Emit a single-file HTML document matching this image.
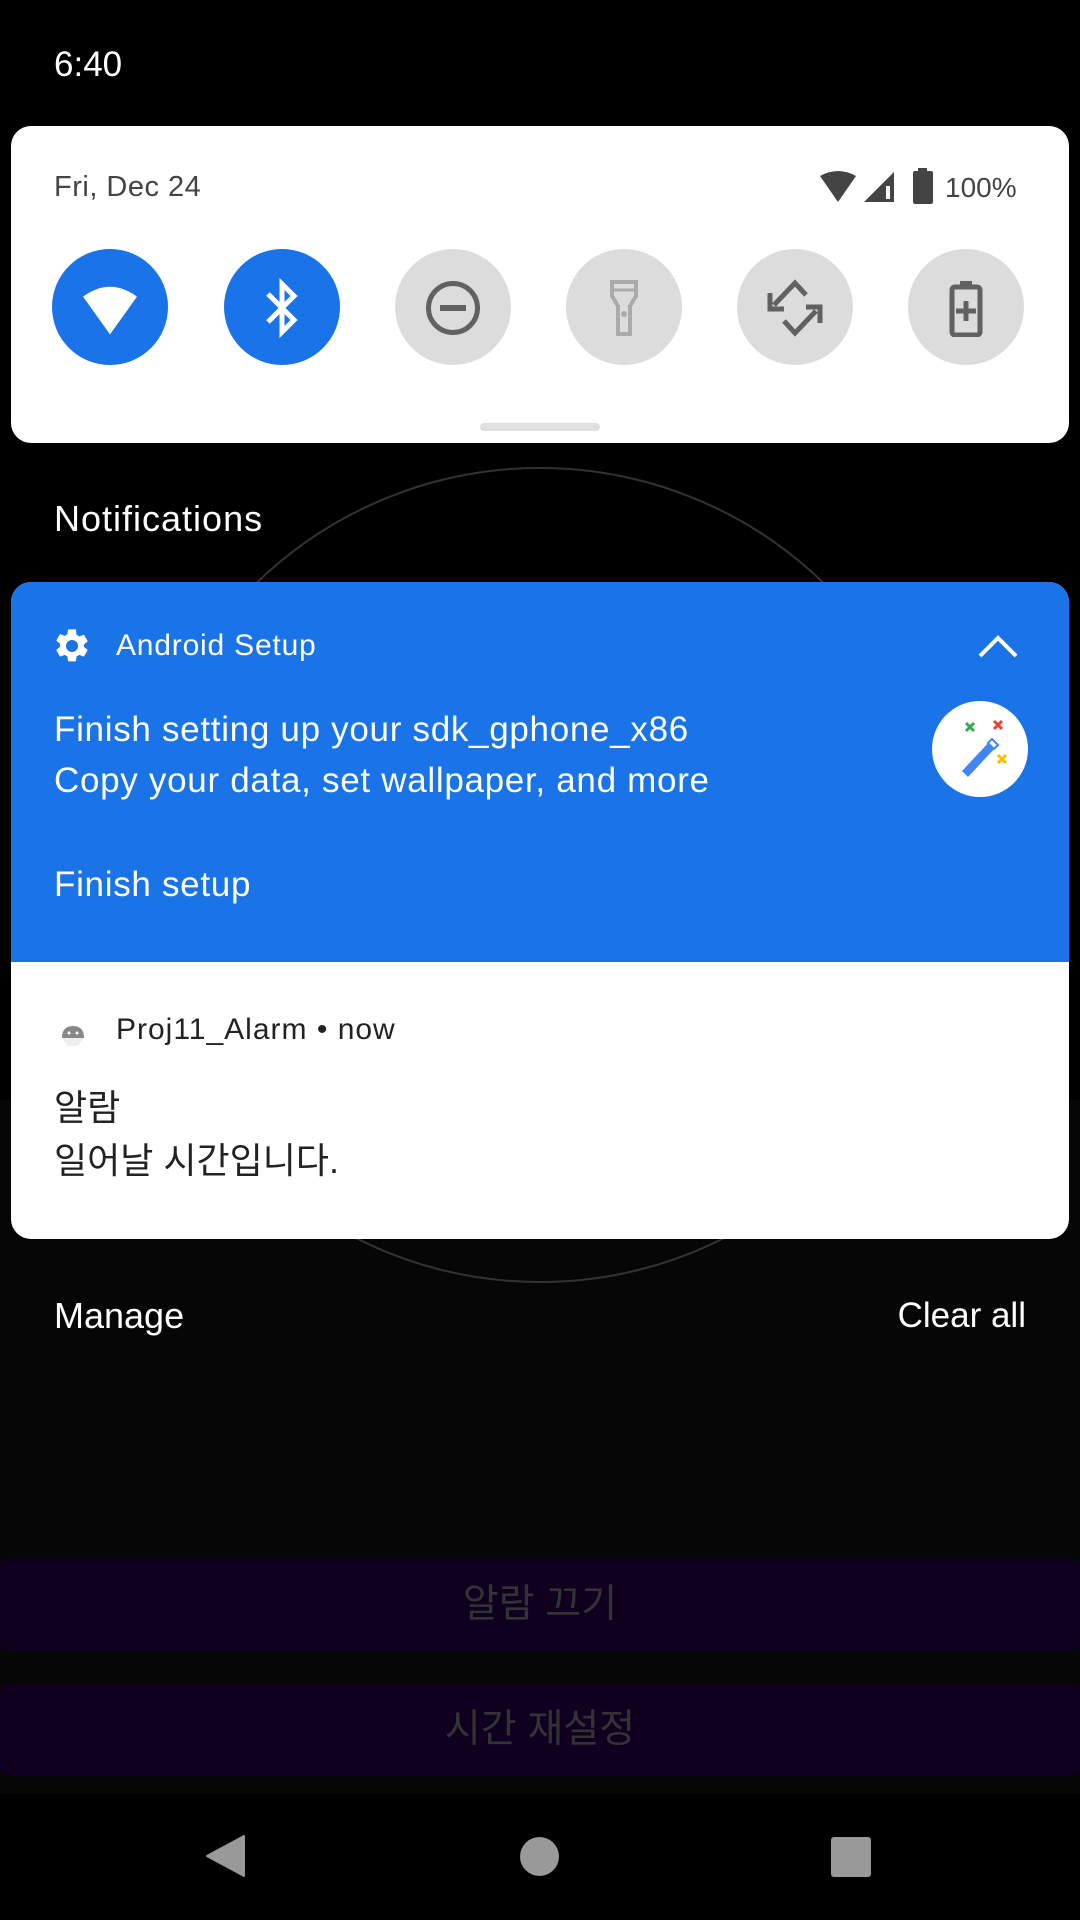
<!DOCTYPE html>
<html><head><meta charset="utf-8"><style>
*{margin:0;padding:0;box-sizing:border-box}
body{width:1080px;height:1920px;background:#060606;position:relative;overflow:hidden;font-family:"Liberation Sans","Noto Sans CJK KR",sans-serif}
.a{position:absolute}
.t{position:absolute;white-space:nowrap;line-height:1}
</style></head><body>
<div class="a" style="left:0;top:0;width:1080px;height:1100px;background:#000"></div>
<div class="a" style="left:132px;top:467px;width:816px;height:816px;border:2px solid #333;border-radius:50%"></div>
<div class="t" style="left:54px;top:47px;font-size:35px;color:#fff">6:40</div>

<div class="a" style="left:11px;top:126px;width:1058px;height:317px;background:#fff;border-radius:20px"></div>
<div class="t" style="left:54px;top:173px;font-size:29px;letter-spacing:0.5px;color:#444">Fri, Dec 24</div>
<svg class="a" style="left:818px;top:170px" width="50" height="34" viewBox="0 0 50 34"><path d="M2 6 Q20 -4 38 6 L20 32Z" fill="#444"/></svg>
<svg class="a" style="left:862px;top:170px" width="34" height="34" viewBox="0 0 34 34"><path d="M32 2 V32 H2Z" fill="#444"/><path d="M24 16 V29 H28 V16Z" fill="#fff"/></svg>
<svg class="a" style="left:911px;top:168px" width="24" height="36" viewBox="0 0 24 36"><rect x="7" y="0" width="9" height="4" fill="#444"/><rect x="2" y="3" width="20" height="33" rx="2" fill="#444"/></svg>
<div class="t" style="left:945px;top:174px;font-size:28px;color:#444">100%</div>

<div class="a" style="left:52px;top:249px;width:116px;height:116px;border-radius:50%;background:#1a73e8"></div>
<svg class="a" style="left:80px;top:284px" width="60" height="54" viewBox="0 0 64 60"><path d="M2 14 Q32 -8 62 14 L32 56Z" fill="#fff"/></svg>
<div class="a" style="left:224px;top:249px;width:116px;height:116px;border-radius:50%;background:#1a73e8"></div>
<svg class="a" style="left:258px;top:278px" width="48" height="60" viewBox="0 0 48 60"><path d="M10 16 L36 42 L24 54 V6 L36 18 L10 44" fill="none" stroke="#fff" stroke-width="5" stroke-linejoin="miter"/></svg>
<div class="a" style="left:395px;top:249px;width:116px;height:116px;border-radius:50%;background:#dcdcdc"></div>
<div class="a" style="left:426px;top:281px;width:54px;height:54px;border-radius:50%;border:5px solid #616161"></div>
<div class="a" style="left:440px;top:305px;width:26px;height:6px;background:#616161"></div>
<div class="a" style="left:566px;top:249px;width:116px;height:116px;border-radius:50%;background:#dcdcdc"></div>
<svg class="a" style="left:604px;top:280px" width="40" height="56" viewBox="0 0 40 56"><path d="M8 2 H32 V16 L26 26 V54 H14 V26 L8 16Z" fill="none" stroke="#aaa" stroke-width="4"/><line x1="8" y1="10" x2="32" y2="10" stroke="#aaa" stroke-width="3"/><circle cx="20" cy="34" r="3" fill="#aaa"/></svg>
<div class="a" style="left:737px;top:249px;width:116px;height:116px;border-radius:50%;background:#dcdcdc"></div>
<svg class="a" style="left:766px;top:279px" width="58" height="58" viewBox="0 0 58 58"><path d="M8 26 L29 4 L40 16 M50 32 L29 54 L18 42" fill="none" stroke="#616161" stroke-width="5"/><path d="M4 14 V30 H18" fill="none" stroke="#616161" stroke-width="5"/><path d="M54 44 V28 H40" fill="none" stroke="#616161" stroke-width="5"/></svg>
<div class="a" style="left:908px;top:249px;width:116px;height:116px;border-radius:50%;background:#dcdcdc"></div>
<svg class="a" style="left:948px;top:281px" width="36" height="56" viewBox="0 0 36 56"><rect x="12" y="0" width="12" height="5" fill="#616161"/><rect x="4" y="6" width="28" height="48" rx="3" fill="none" stroke="#616161" stroke-width="5"/><path d="M18 20 V40 M8 30 H28" stroke="#616161" stroke-width="5"/></svg>
<div class="a" style="left:480px;top:423px;width:120px;height:8px;border-radius:4px;background:#e0e0e0"></div>

<div class="t" style="left:54px;top:501px;font-size:36px;letter-spacing:1px;color:#fff">Notifications</div>

<div class="a" style="left:11px;top:582px;width:1058px;height:657px;border-radius:20px;overflow:hidden;background:#fff">
  <div class="a" style="left:0;top:0;width:1058px;height:380px;background:#1b73e8"></div>
</div>
<svg class="a" style="left:52px;top:626px" width="40" height="40" viewBox="0 0 24 24"><path fill="#fff" d="M19.14 12.94c.04-.3.06-.61.06-.94s-.02-.64-.07-.94l2.03-1.58a.49.49 0 0 0 .12-.61l-1.92-3.32a.49.49 0 0 0-.59-.22l-2.390.96c-.5-.38-1.030-.7-1.62-.94l-.36-2.540A.48.48 0 0 0 13.92 2h-3.84a.48.48 0 0 0-.48.41l-.36 2.54c-.59.24-1.13.57-1.62.94l-2.39-.96a.49.49 0 0 0-.59.22L2.72 8.47a.47.47 0 0 0 .12.61l2.03 1.58c-.05.3-.09.63-.09.94s.02.64.07.94l-2.03 1.58a.49.49 0 0 0-.12.61l1.92 3.32c.12.22.37.29.59.22l2.39-.96c.5.38 1.03.7 1.62.94l.36 2.54c.05.24.24.41.48.41h3.84c.24 0 .44-.17.47-.41l.36-2.54c.59-.24 1.13-.56 1.62-.94l2.39.96c.22.08.47 0 .59-.22l1.92-3.32a.47.47 0 0 0-.12-.61l-2.01-1.58zM12 15.6A3.6 3.6 0 1 1 12 8.4a3.6 3.6 0 0 1 0 7.2z"/></svg>
<div class="t" style="left:116px;top:631px;font-size:30px;letter-spacing:0.8px;color:#fff">Android Setup</div>
<svg class="a" style="left:976px;top:632px" width="44" height="28" viewBox="0 0 44 28"><path d="M4 24 L22 6 L40 24" fill="none" stroke="#fff" stroke-width="4"/></svg>
<div class="t" style="left:54px;top:712px;font-size:35px;letter-spacing:0.7px;color:#fff">Finish setting up your sdk_gphone_x86</div>
<div class="t" style="left:54px;top:763px;font-size:35px;letter-spacing:0.7px;color:#fff">Copy your data, set wallpaper, and more</div>
<div class="a" style="left:932px;top:701px;width:96px;height:96px;border-radius:50%;background:#fff"></div>
<svg class="a" style="left:932px;top:701px" width="96" height="96" viewBox="0 0 96 96"><path d="M30 70 L58 40 L64 46 L36 76Z" fill="#4285f4"/><path d="M56 42 L60 38 L66 44 L62 48Z" fill="#fff" stroke="#4285f4" stroke-width="2"/><path d="M34 22 l8 8 m0 -8 l-8 8" stroke="#34a853" stroke-width="3"/><path d="M62 20 l8 8 m0 -8 l-8 8" stroke="#ea4335" stroke-width="3"/><path d="M66 54 l8 8 m0 -8 l-8 8" stroke="#fbbc04" stroke-width="3"/></svg>
<div class="t" style="left:54px;top:867px;font-size:35px;letter-spacing:0.7px;color:#fff">Finish setup</div>

<svg class="a" style="left:58px;top:1018px" width="30" height="30" viewBox="0 0 30 30"><path d="M4 20 Q4 8 15 8 Q26 8 26 20Z" fill="#888"/><path d="M4 20 L26 20 L20 28 L10 28Z" fill="#eee"/><circle cx="11" cy="15" r="1.5" fill="#fff"/><circle cx="19" cy="15" r="1.5" fill="#fff"/></svg>
<div class="t" style="left:116px;top:1015px;font-size:30px;letter-spacing:1px;color:#222">Proj11_Alarm • now</div>
<div class="t" style="left:54px;top:1090px;font-size:36px;color:#222">알람</div>
<div class="t" style="left:54px;top:1143px;font-size:36px;color:#222">일어날 시간입니다.</div>

<div class="t" style="left:54px;top:1298px;font-size:36px;color:#fff">Manage</div>
<div class="t" style="right:54px;top:1298px;font-size:35px;color:#fff">Clear all</div>

<div class="a" style="left:0;top:1559px;width:1080px;height:92px;border-radius:8px;background:#0f0020"></div>
<div class="t" style="left:0;width:1080px;text-align:center;top:1585px;font-size:39px;color:#333">알람 끄기</div>
<div class="a" style="left:0;top:1684px;width:1080px;height:92px;border-radius:8px;background:#0f0020"></div>
<div class="t" style="left:0;width:1080px;text-align:center;top:1710px;font-size:39px;color:#333">시간 재설정</div>

<div class="a" style="left:0;top:1794px;width:1080px;height:126px;background:#000"></div>
<svg class="a" style="left:204px;top:1834px" width="42" height="44" viewBox="0 0 42 44"><path d="M40 2 V42 L3 22Z" fill="#999" stroke="#999" stroke-width="2" stroke-linejoin="round"/></svg>
<div class="a" style="left:520px;top:1837px;width:39px;height:39px;border-radius:50%;background:#999"></div>
<div class="a" style="left:831px;top:1837px;width:40px;height:40px;border-radius:3px;background:#999"></div>
</body></html>
